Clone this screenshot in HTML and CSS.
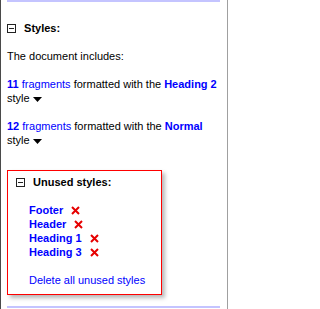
FILE: index.html
```html
<!DOCTYPE html>
<html>
<head>
<meta charset="utf-8">
<link rel="stylesheet" href="styles.css">
</head>
<body>
<div class="pane">
  <div class="rule"></div>
  <div class="head">
    <svg class="toggle" width="9" height="9" viewBox="0 0 9 9"><rect x="0.5" y="0.5" width="8" height="8" fill="#fff" stroke="#222"/><line x1="2" y1="4.5" x2="7" y2="4.5" stroke="#222"/></svg>
    <span class="title">Styles:</span>
  </div>
  <p class="para">The document includes:</p>
  <p class="para"><a class="link strong">11</a> <a class="link">fragments</a> formatted with the <a class="link strong">Heading 2</a> style <svg class="caret" width="9" height="5" viewBox="0 0 9 5"><polygon points="0,0 9,0 4.5,5" fill="#000"/></svg></p>
  <p class="para"><a class="link strong">12</a> <a class="link">fragments</a> formatted with the <a class="link strong">Normal</a> style <svg class="caret" width="9" height="5" viewBox="0 0 9 5"><polygon points="0,0 9,0 4.5,5" fill="#000"/></svg></p>
  <div class="unused">
    <div class="head">
      <svg class="toggle" width="9" height="9" viewBox="0 0 9 9"><rect x="0.5" y="0.5" width="8" height="8" fill="#fff" stroke="#222"/><line x1="2" y1="4.5" x2="7" y2="4.5" stroke="#222"/></svg>
      <span class="title">Unused styles:</span>
    </div>
    <ul class="list">
      <li><a class="link strong">Footer</a> <svg class="del" width="9" height="9" viewBox="0 0 9 9"><path d="M1 1L8 8M8 1L1 8" stroke="#e60000" stroke-width="2"/></svg></li>
      <li><a class="link strong">Header</a> <svg class="del" width="9" height="9" viewBox="0 0 9 9"><path d="M1 1L8 8M8 1L1 8" stroke="#e60000" stroke-width="2"/></svg></li>
      <li><a class="link strong">Heading 1</a> <svg class="del" width="9" height="9" viewBox="0 0 9 9"><path d="M1 1L8 8M8 1L1 8" stroke="#e60000" stroke-width="2"/></svg></li>
      <li><a class="link strong">Heading 3</a> <svg class="del" width="9" height="9" viewBox="0 0 9 9"><path d="M1 1L8 8M8 1L1 8" stroke="#e60000" stroke-width="2"/></svg></li>
    </ul>
    <a class="link delete-all">Delete all unused styles</a>
  </div>
  <div class="rule bottom"></div>
</div>
</body>
</html>
```
FILE: styles.css
```css
html, body {
  margin: 0;
  padding: 0;
  background: #fff;
}
body {
  font-family: "Liberation Sans", Arial, sans-serif;
  font-size: 11px;
  line-height: 14px;
  color: #000;
}
.pane {
  box-sizing: border-box;
  width: 228px;
  height: 309px;
  border-left: 1px solid #4a4a4a;
  border-right: 1px solid #a0a0a0;
  padding: 0 7px 0 6px;
  display: flex;
  flex-direction: column;
  overflow: hidden;
}
.rule {
  height: 2px;
  background: #c4c4ff;
  flex: none;
}
.rule.bottom {
  margin-top: 11px;
}
.head {
  margin-top: 19px;
  white-space: nowrap;
}
.toggle {
  vertical-align: -1px;
  margin-right: 5px;
}
.title {
  font-weight: bold;
}
.para {
  margin: 14px 0 0 0;
}
.link {
  color: #0000ff;
  text-decoration: none;
}
.strong {
  font-weight: bold;
}
.caret {
  vertical-align: 0;
}
.unused {
  margin-top: 23px;
  width: 155px;
  box-sizing: border-box;
  border: 1px solid #ff0000;
  padding: 4px 8px 7px 8px;
  box-shadow: 3px 3px 4px rgba(0, 0, 0, 0.28);
  flex: none;
}
.unused .head {
  margin-top: 0;
}
.list {
  list-style: none;
  margin: 14px 0 0 0;
  padding: 0 0 0 13px;
}
.del {
  vertical-align: -1px;
  margin-left: 5px;
}
.delete-all {
  display: block;
  margin: 14px 0 0 13px;
}
```
